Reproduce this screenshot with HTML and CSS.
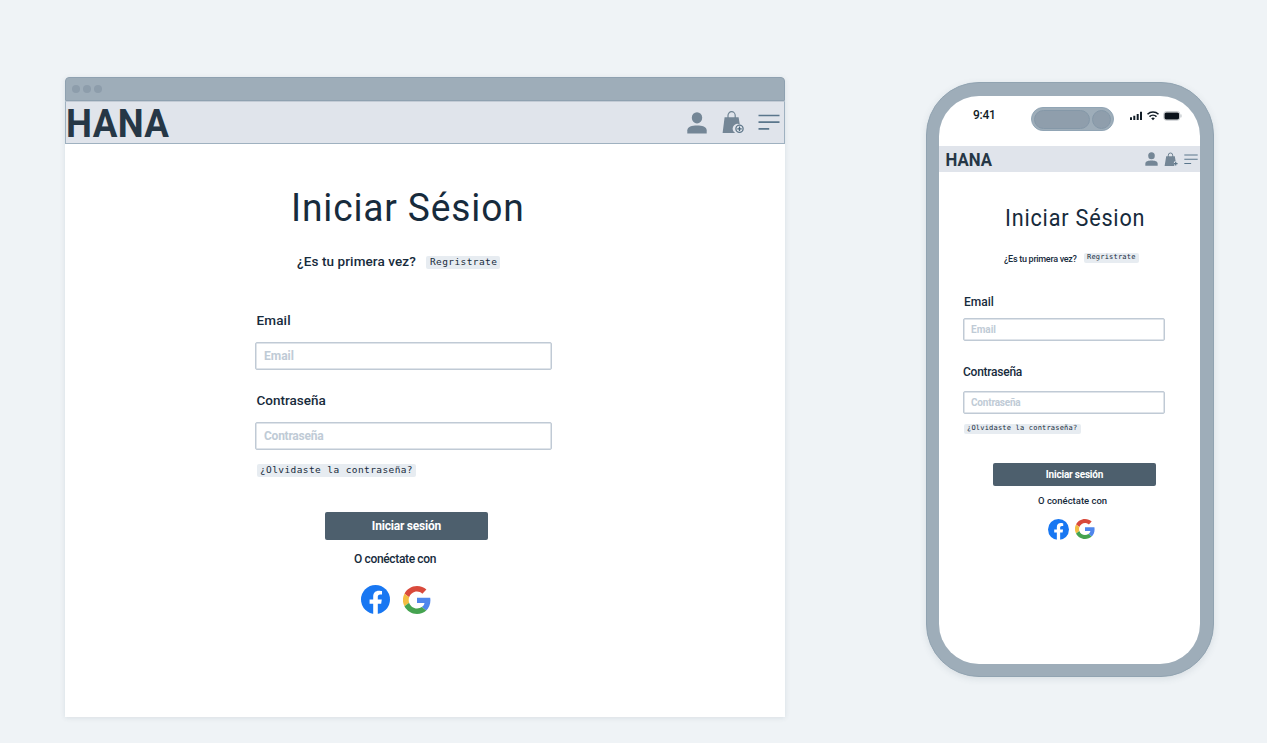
FILE: index.html
```html
<!DOCTYPE html>
<html lang="es">
<head>
<meta charset="utf-8">
<title>Hana – Iniciar sesión</title>
<link rel="stylesheet" href="styles.css">
</head>
<body>
<svg class="symbols" width="0" height="0">
  <symbol id="user" viewBox="0 0 20 22"><ellipse cx="10" cy="5.8" rx="5.2" ry="5.600"/><path d="M.3 21.500v-3.200C.3 14.600 5 13.400 10 13.400s9.700 1.200 9.700 4.900v3.200z"/></symbol>
  <symbol id="bag" viewBox="0 0 22 23"><path d="M2.600 6.200h14l1.200 7.200a4.700 4.700 0 0 0-4.600 8.600H.6z"/><path d="M6 7V4.600a3.600 3.900 0 0 1 7.200 0V7" fill="none" stroke="#6f8393" stroke-width="1.200"/><circle cx="17.500" cy="17.800" r="3.600" fill="#e5e9ef" stroke="#5f778a" stroke-width="1.300"/><path d="M15.300 17.800h4.400M17.500 15.600V20" stroke="#4d697e" stroke-width="1.300"/></symbol>
  <symbol id="bag-small" viewBox="0 0 14 15"><path d="M2.200 4.200h8.600l.8 4.800-1.600.8-.2 1.800.8 1.500-.6.900H.6z"/><path d="M4.300 5V3.200a2.200 2.200 0 0 1 4.400 0V5" fill="none" stroke="#6f8393"/><path d="M9.800 11.600h3.800M11.700 9.700v3.800" stroke="#5f778a" stroke-width="1.200"/></symbol>
  <symbol id="menu" viewBox="0 0 22 17"><path d="M.5 1.500h21M.5 8.200h21M.5 14.900h10.700" stroke="#5a768c" stroke-width="1.700"/></symbol>
  <symbol id="facebook" viewBox="0 0 24 24"><circle cx="12" cy="12" r="12" fill="#1877f2"/><path fill="#fff" d="M16.700 15.500l.5-3.500h-3.300V9.800c0-1 .5-1.900 2-1.900h1.500V5s-1.400-.3-2.700-.3c-2.700 0-4.600 1.700-4.600 4.700V12h-3v3.500h3v8.400c1.200.2 2.500.2 3.800 0v-8.400z"/></symbol>
  <symbol id="google" viewBox="0 0 48 48"><path fill="#d94a3c" d="M24 9.500c3.500 0 6.700 1.200 9.200 3.600l6.900-6.900C35.900 2.400 30.500 0 24 0 14.600 0 6.500 5.400 2.600 13.200l8 6.200C12.400 13.700 17.700 9.500 24 9.500z"/><path fill="#4f86ec" d="M47 24.600c0-1.600-.2-3.100-.4-4.600H24v9h12.900c-.6 3-2.300 5.500-4.800 7.200l7.700 6C44.400 38 47 32 47 24.600z"/><path fill="#f3bd42" d="M10.500 28.600a14.500 14.500 0 0 1 0-9.200l-8-6.200a24 24 0 0 0 0 21.600z"/><path fill="#45a350" d="M24 48c6.500 0 11.900-2.100 15.900-5.800l-7.700-6c-2.200 1.500-4.900 2.300-8.200 2.300-6.300 0-11.600-4.200-13.500-9.900l-8 6.200C6.500 42.600 14.600 48 24 48z"/></symbol>
</svg>
<main class="stage">
  <section class="browser">
    <div class="titlebar"><i></i><i></i><i></i></div>
    <header class="nav">
      <strong class="brand">HANA</strong>
      <svg class="i-user"><use href="#user"/></svg>
      <svg class="i-bag"><use href="#bag"/></svg>
      <svg class="i-menu"><use href="#menu"/></svg>
    </header>
    <form class="form">
      <h1>Iniciar Sésion</h1>
      <p class="signup"><span>¿Es tu primera vez?</span><a class="chip">Regristrate</a></p>
      <label class="label-email">Email</label>
      <div class="field"><span class="ph-email">Email</span></div>
      <label class="label-pass">Contraseña</label>
      <div class="field"><span class="ph-pass">Contraseña</span></div>
      <a class="chip forgot">¿Olvidaste la contraseña?</a>
      <div class="submit"><span>Iniciar sesión</span></div>
      <p class="connect">O conéctate con</p>
      <div class="social"><svg class="fb"><use href="#facebook"/></svg><svg class="gg"><use href="#google"/></svg></div>
    </form>
  </section>
  <section class="phone">
    <div class="screen">
      <div class="status">
        <span class="time">9:41</span>
        <div class="island"><i></i><b></b></div>
        <svg class="signals" width="52" height="12" viewBox="0 0 52 12">
          <path d="M0 7.200h2v2.800H0zM3.300 5.700h2V10h-2zM6.700 4h2v6h-2zM10 1.800h2V10h-2z" fill="#111c26"/>
          <g fill="none" stroke="#111c26" stroke-width="1.500"><path d="M17.500 4.300a8 8 0 0 1 11 0M19.500 6.600a5 5 0 0 1 7 0"/></g><path d="M21.200 8.300a2.700 2.700 0 0 1 3.600 0L23 10.200z" fill="#111c26"/>
          <rect x="33.800" y="1.600" width="16" height="8.600" rx="2.500" fill="#fff" stroke="#c5c9cc"/><rect x="34.500" y="2.400" width="14.600" height="7" rx="1.700" fill="#0b131b"/><path d="M51 4.500v2.800" stroke="#b9bfc4"/>
        </svg>
      </div>
      <header class="nav">
        <strong class="brand">HANA</strong>
        <svg class="i-user"><use href="#user"/></svg>
        <svg class="i-bag"><use href="#bag-small"/></svg>
        <svg class="i-menu"><use href="#menu"/></svg>
      </header>
      <form class="form">
        <h1>Iniciar Sésion</h1>
        <p class="signup"><span>¿Es tu primera vez?</span><a class="chip">Regristrate</a></p>
        <label class="label-email">Email</label>
        <div class="field"><span class="ph-email">Email</span></div>
        <label class="label-pass">Contraseña</label>
        <div class="field"><span class="ph-pass">Contraseña</span></div>
        <a class="chip forgot">¿Olvidaste la contraseña?</a>
        <div class="submit"><span>Iniciar sesión</span></div>
        <p class="connect">O conéctate con</p>
        <div class="social"><svg class="fb"><use href="#facebook"/></svg><svg class="gg"><use href="#google"/></svg></div>
      </form>
    </div>
  </section>
</main>
</body>
</html>
```
FILE: styles.css
```css
* { box-sizing: border-box; }
body { margin: 0; background: #eff3f6; color: #172b3c; font-family: Roboto, "Liberation Sans", sans-serif; }
.symbols { display: block; }
.stage { display: flex; align-items: flex-start; height: 743px; padding: 77px 53px 0 65px; justify-content: space-between; overflow: hidden; }
h1, p { margin: 0; }
h1 { font-weight: 400; white-space: nowrap; transform: scaleX(.94); transform-origin: 0 0; }
label { display: block; font-weight: 500; white-space: nowrap; }
svg { display: block; flex: none; }

.browser { width: 720px; height: 640px; background: #fff; border-radius: 4px 4px 0 0; box-shadow: 0 1px 5px rgba(60, 80, 100, .12); }
.titlebar { display: flex; gap: 3px; align-items: center; height: 24px; padding-left: 6px; background: #9eadb9; border: 1px solid #8fa1b0; border-radius: 4px 4px 0 0; }
.titlebar i { width: 8px; height: 8px; border-radius: 50%; background: #8d9dab; }

.nav { display: flex; align-items: flex-start; background: #e0e4eb; fill: #748696; }
.brand { color: #263746; font-weight: 700; transform: scaleX(.93); transform-origin: 0 0; }
.browser .nav { height: 43px; border: 1px solid #9fb1c0; border-top-color: #c3cbd5; }
.browser .brand { width: 620px; font-size: 39.5px; line-height: 44px; letter-spacing: .4px; }
.browser .i-user { width: 20px; height: 22px; margin: 10px 0 0 1px; }
.browser .i-bag { width: 22px; height: 23px; margin: 9px 0 0 15px; }
.browser .i-menu { width: 22px; height: 17px; margin: 12px 0 0 14px; }

.browser .form { display: flex; flex-direction: column; align-items: flex-start; padding: 40px 0 0 190px; }
.browser h1 { margin-left: 35.5px; font-size: 39.5px; line-height: 48px; letter-spacing: .9px; }
.signup { display: flex; align-items: flex-start; font-weight: 500; white-space: nowrap; }
.signup span { flex: none; }
.browser .signup { margin: 19px 0 0 42px; height: 20px; font-size: 13.5px; line-height: 20px; letter-spacing: .1px; }
.browser .signup span { width: 129px; }
.chip { flex: none; background: #e7ecf1; border-radius: 2px; font-family: "DejaVu Sans Mono", monospace; font-weight: 400; white-space: nowrap; color: #172b3c; }
.browser .chip { height: 13px; padding: 0 4px; font-size: 9.5px; line-height: 12px; letter-spacing: .4px; }
.browser .signup .chip { margin-top: 5px; width: 74px; }
.browser label { margin: 39px 0 12px 1.5px; font-size: 13.5px; line-height: 20px; }
.browser .label-email { letter-spacing: .15px; }
.browser .label-pass { margin-top: 20px; }
.field { display: flex; align-items: center; border: 1px solid #c0cad5; border-radius: 2px; box-shadow: inset 0 0 0 .5px #c0cad5; color: #c0cbd6; font-weight: 700; }
.browser .field { width: 297px; height: 28px; padding-left: 8px; font-size: 12px; }
.browser .ph-pass { letter-spacing: -.25px; }
.browser .forgot { margin: 14px 0 0 2px; width: 159px; padding-left: 3px; }
.submit { display: flex; align-items: center; justify-content: center; background: #4d5f6d; border-radius: 2px; color: #fff; font-weight: 700; white-space: nowrap; }
.browser .submit { margin: 35px 0 0 70px; width: 163px; height: 28px; font-size: 12px; letter-spacing: -.2px; }
.connect { font-weight: 500; white-space: nowrap; }
.browser .connect { margin: 9px 0 0 99px; font-size: 12px; line-height: 20px; letter-spacing: -.35px; }
.social { display: flex; }
.browser .social { margin: 16px 0 0 106px; }
.browser .fb { width: 29px; height: 29px; }
.browser .gg { width: 28px; height: 28px; margin: 1px 0 0 13px; }

.phone { width: 288px; height: 595px; margin-top: 5px; padding: 13px; background: #9eadb9; border: 1px solid #91a3b1; border-radius: 53px; box-shadow: 0 2px 7px rgba(60, 80, 100, .12); }
.screen { width: 261px; height: 568px; margin: 0 -1px; background: #fff; border-radius: 40px; overflow: hidden; }
.status { display: flex; align-items: flex-start; height: 50px; }
.time { width: 58px; margin: 12px 0 0 34px; color: #111c26; font-size: 12px; font-weight: 500; line-height: 15px; letter-spacing: -.3px; }
.island { display: flex; align-items: center; width: 83px; height: 24px; margin-top: 11px; padding-left: 2px; gap: 2px; background: #9eadb9; border: 1px solid #91a5b5; border-radius: 12px; }
.island i, .island b { height: 19px; border: 1px solid #8598a8; border-radius: 10px; background: #8f9eac; }
.island i { width: 56px; }
.island b { width: 19px; }
.signals { margin: 14px 0 0 16px; }
.phone .nav { height: 26px; }
.phone .brand { width: 206px; padding-left: 7px; font-size: 18px; line-height: 27px; letter-spacing: 0; }
.phone .i-user { width: 13px; height: 14px; margin-top: 6px; }
.phone .i-bag { width: 14px; height: 15px; margin: 6px 0 0 6px; }
.phone .i-menu { width: 14px; height: 11px; margin: 8px 0 0 6px; }
.phone .form { display: flex; flex-direction: column; align-items: flex-start; padding: 33px 0 0 24px; }
.phone h1 { margin-left: 41.5px; font-size: 23px; line-height: 28px; letter-spacing: .85px; }
.phone .signup { margin: 19px 0 0 41px; height: 14px; font-size: 9px; line-height: 14px; }
.phone .signup span { width: 80px; letter-spacing: -.28px; }
.phone .chip { height: 10px; padding: 0 3px; font-size: 7px; line-height: 9px; letter-spacing: .2px; }
.phone .signup .chip { width: 55px; margin-top: 1px; }
.phone label { margin: 28px 0 8px 1px; font-size: 12px; line-height: 16px; }
.phone .label-pass { margin: 23px 0 11px 0; letter-spacing: -.25px; }
.phone .field { width: 202px; height: 23px; padding-left: 7px; font-size: 10px; }
.phone .ph-pass { letter-spacing: -.2px; }
.phone .forgot { width: 117px; margin: 10px 0 0 1px; }
.phone .submit { width: 163px; height: 23px; margin: 29px 0 0 30px; font-size: 10px; letter-spacing: -.2px; }
.phone .connect { margin: 8px 0 0 75px; font-size: 9.5px; line-height: 14px; }
.phone .social { margin: 11px 0 0 85px; }
.phone .fb { width: 21px; height: 21px; }
.phone .gg { width: 20px; height: 20px; margin-left: 6px; }
```
